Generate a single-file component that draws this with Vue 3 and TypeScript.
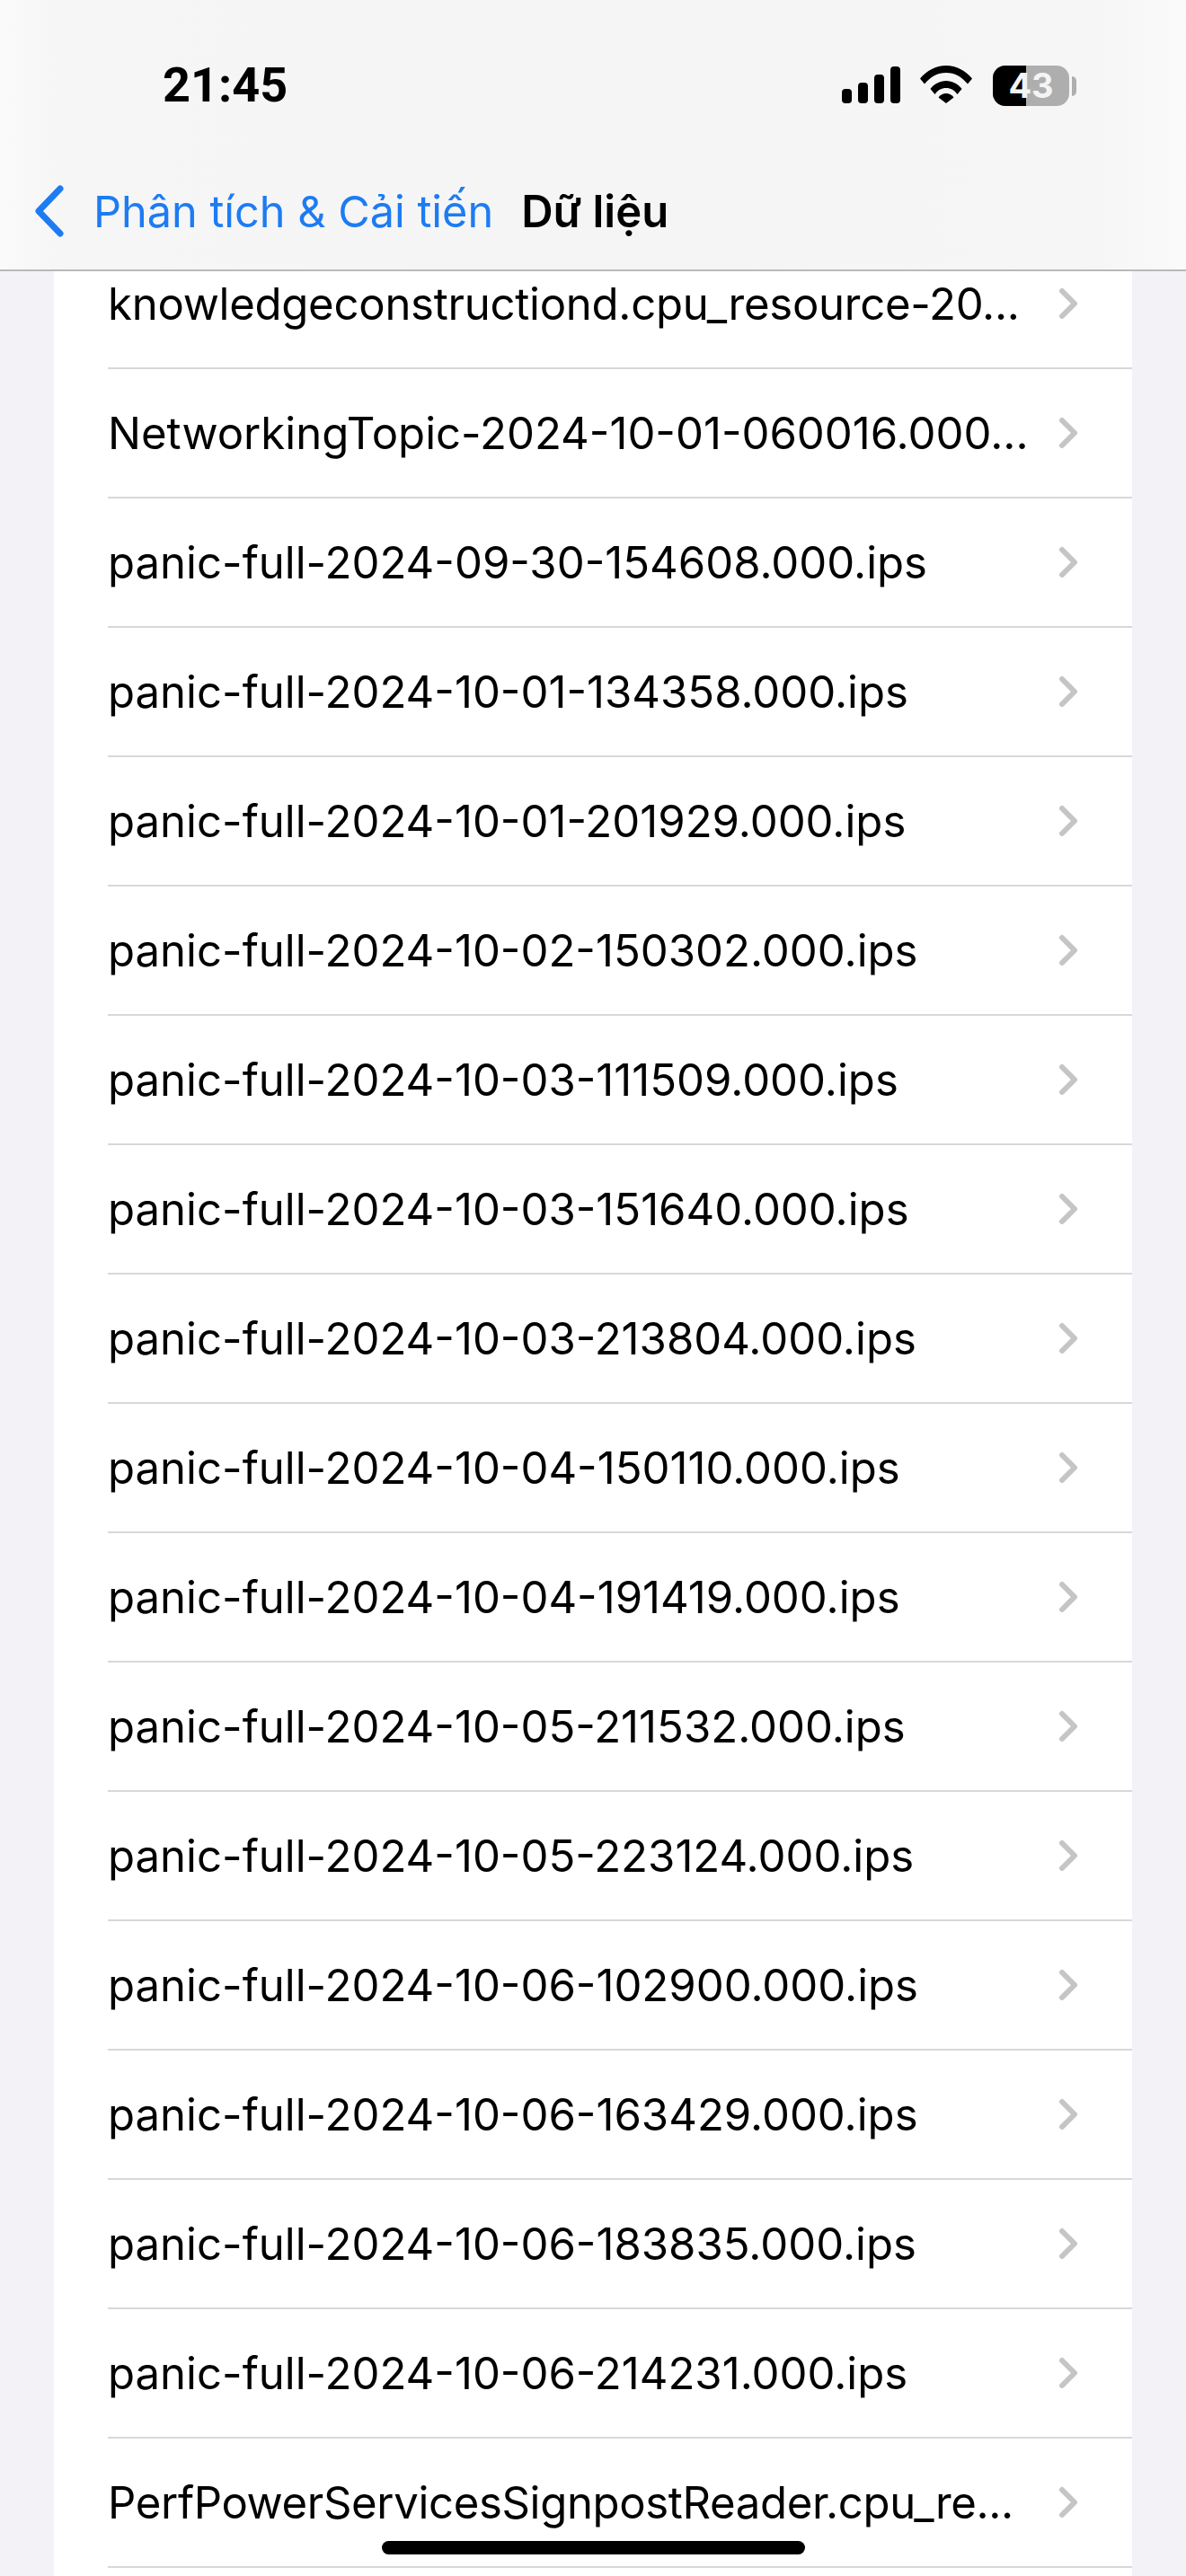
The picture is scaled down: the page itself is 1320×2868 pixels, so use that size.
<script setup lang="ts">
interface FileRow {
  name: string;
  tight?: number;
}

const files: FileRow[] = [
  { name: "knowledgeconstructiond.cpu_resource-20...", tight: -0.28 },
  { name: "NetworkingTopic-2024-10-01-060016.000..." },
  { name: "panic-full-2024-09-30-154608.000.ips" },
  { name: "panic-full-2024-10-01-134358.000.ips" },
  { name: "panic-full-2024-10-01-201929.000.ips" },
  { name: "panic-full-2024-10-02-150302.000.ips" },
  { name: "panic-full-2024-10-03-111509.000.ips" },
  { name: "panic-full-2024-10-03-151640.000.ips" },
  { name: "panic-full-2024-10-03-213804.000.ips" },
  { name: "panic-full-2024-10-04-150110.000.ips" },
  { name: "panic-full-2024-10-04-191419.000.ips" },
  { name: "panic-full-2024-10-05-211532.000.ips" },
  { name: "panic-full-2024-10-05-223124.000.ips" },
  { name: "panic-full-2024-10-06-102900.000.ips" },
  { name: "panic-full-2024-10-06-163429.000.ips" },
  { name: "panic-full-2024-10-06-183835.000.ips" },
  { name: "panic-full-2024-10-06-214231.000.ips" },
  { name: "PerfPowerServicesSignpostReader.cpu_re...", tight: -0.36 },
];
</script>

<template>
  <div class="screen">
    <header class="top">
      <div class="status">
        <span class="time">21:45</span>
        <div class="indicators">
          <svg class="signal" width="65" height="41" viewBox="0 0 65 41">
            <rect x="0" y="25" width="11" height="16" rx="4" />
            <rect x="18" y="18" width="11" height="23" rx="4" />
            <rect x="36" y="9" width="11" height="32" rx="4" />
            <rect x="54" y="0" width="11" height="41" rx="4" />
          </svg>
          <svg class="wifi" width="58" height="42" viewBox="0 0 58 42">
            <path d="M0 14.500C7.500 5.500 17.500 0 29 0s21.500 5.500 29 14.500l-5 6C46.500 12.500 38.500 8 29 8S11.500 12.500 5 20.500z" />
            <path d="M11.500 26C15.500 20.500 22 17 29 17s13.500 3.500 17.500 9l-5 6C38.500 27.500 34 25 29 25s-9.500 2.500-12.500 7z" />
            <path d="M20.500 35.500C22.500 32.500 25.500 31 29 31s6.500 1.500 8.500 4.500L29 42z" />
          </svg>
          <div class="battery">
            <div class="battery-body">
              <div class="battery-fill"></div>
              <span class="battery-num">43</span>
            </div>
            <div class="battery-nub"></div>
          </div>
        </div>
      </div>
      <nav class="nav">
        <svg class="back" width="34" height="58" viewBox="0 0 34 58">
          <path d="M29 4L5 29l24 25" />
        </svg>
        <span class="back-label">Phân tích &amp; Cải tiến</span>
        <span class="title">Dữ liệu</span>
      </nav>
    </header>

    <main class="content">
      <ul class="list">
        <li v-for="file in files" :key="file.name" class="row">
          <span class="name" :style="{ letterSpacing: (file.tight ?? 0) + 'px' }">{{ file.name }}</span>
          <svg class="chev" width="24" height="38" viewBox="0 0 24 38">
            <path d="M6 5l14 14L6 33" />
          </svg>
        </li>
      </ul>
    </main>

    <div class="home-bar"></div>
  </div>
</template>

<style>
html,
body {
  margin: 0;
  background: #f2f2f7;
}
</style>

<style scoped>
.screen {
  position: relative;
  width: 1320px;
  height: 2868px;
  display: flex;
  flex-direction: column;
  overflow: hidden;
  background: #f2f2f7;
  font-family: "Inter", "Liberation Sans", sans-serif;
  color: #000;
}

.top {
  flex: none;
  height: 302px;
  box-sizing: border-box;
  background: linear-gradient(90deg, #fafafa 0, #f6f6f6 5%, #f5f5f5 50%, #f6f6f6 92%, #fafafa 100%);
  border-bottom: 2px solid #b9b9bc;
}

.status {
  height: 190px;
  box-sizing: border-box;
  padding: 72px 122px 0 181px;
  display: flex;
  justify-content: space-between;
  align-items: flex-start;
}

.time {
  font-family: "Roboto", "Liberation Sans", sans-serif;
  font-size: 54px;
  font-weight: 700;
  line-height: 46px;
}

.indicators {
  display: flex;
  align-items: flex-start;
  gap: 23px;
  padding-top: 1px;
}

.signal {
  margin-top: 1px;
  margin-right: -1px;
}

.battery {
  display: flex;
  align-items: center;
  gap: 3px;
}

.battery-body {
  position: relative;
  width: 85px;
  height: 45px;
  border-radius: 14px;
  background: #aeaeae;
  overflow: hidden;
}

.battery-fill {
  width: 37px;
  height: 100%;
  background: #000;
}

.battery-num {
  position: absolute;
  inset: 0;
  text-align: center;
  color: #f4f4f4;
  font-family: "Inter", "Liberation Sans", sans-serif;
  font-size: 38px;
  font-weight: 700;
  line-height: 45px;
}

.battery-nub {
  width: 5px;
  height: 22px;
  background: #aeaeae;
  border-radius: 0 5px 5px 0;
}

.nav {
  display: flex;
  align-items: center;
  height: 90px;
  padding-left: 38px;
}

.back {
  fill: none;
  stroke: #1d7cf2;
  stroke-width: 7;
  stroke-linecap: round;
  stroke-linejoin: round;
}

.back-label {
  margin-left: 32px;
  color: #1d7cf2;
  font-size: 48.600px;
}

.title {
  margin-left: 31px;
  font-size: 49px;
  font-weight: 600;
}

.content {
  flex: 1;
  overflow: hidden;
}

.list {
  list-style: none;
  margin: -35px 60px 0;
  padding: 0 0 20px 60px;
  background: #fff;
}

.row {
  height: 144px;
  box-sizing: border-box;
  display: flex;
  align-items: center;
  justify-content: space-between;
  padding: 0 60px 0 0;
  border-bottom: 2px solid #d8d8da;
}

.name {
  font-size: 49.100px;
  white-space: nowrap;
}

.chev {
  fill: none;
  stroke: #c5c5c7;
  stroke-width: 6;
  stroke-linecap: round;
  stroke-linejoin: round;
}

.home-bar {
  position: absolute;
  left: 425px;
  top: 2829px;
  width: 471px;
  height: 15px;
  border-radius: 8px;
  background: #000;
}
</style>
